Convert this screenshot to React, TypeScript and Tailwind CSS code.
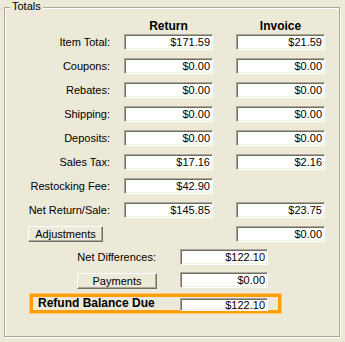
const rows: [string, string, string | null][] = [
  ['Item Total:', '$171.59', '$21.59'],
  ['Coupons:', '$0.00', '$0.00'],
  ['Rebates:', '$0.00', '$0.00'],
  ['Shipping:', '$0.00', '$0.00'],
  ['Deposits:', '$0.00', '$0.00'],
  ['Sales Tax:', '$17.16', '$2.16'],
  ['Restocking Fee:', '$42.90', null],
  ['Net Return/Sale:', '$145.85', '$23.75'],
];

const Field = ({ value, className = '' }: { value: string; className?: string }) => (
  <div
    className={`flex h-[16px] items-center justify-end bg-white pr-[2px] leading-[14px] border border-t-[#aca899] border-l-[#aca899] border-b-white border-r-white shadow-[inset_1px_1px_0_#716f64,inset_-1px_-1px_0_#f1efe2] ${className}`}
  >
    {value}
  </div>
);

const Button = ({ label, className = '' }: { label: string; className?: string }) => (
  <button
    className={`flex h-[16px] items-center justify-center bg-[#ece9d8] leading-[14px] border border-t-white border-l-white border-b-[#716f64] border-r-[#716f64] shadow-[inset_-1px_-1px_0_#aca899] ${className}`}
  >
    {label}
  </button>
);

export default function App() {
  return (
    <div className="w-[345px] h-[342px] bg-[#ece9d8] pt-[7px] pl-[4px] text-[11px] text-black font-['Liberation_Sans',Arial,sans-serif]">
      <div className="relative w-[336px] h-[330px] border border-[#aca899] shadow-[inset_1px_1px_0_#fff,1px_1px_0_#fff]">
        <span className="absolute left-[5px] top-[-8px] bg-[#ece9d8] px-[2px] leading-[13px]">Totals</span>

        <div className="flex pt-[11px] text-[12px] font-bold leading-[14px]">
          <div className="w-[105px]" />
          <div className="ml-[14px] w-[89px] text-center">Return</div>
          <div className="ml-[23px] w-[89px] text-center">Invoice</div>
        </div>

        <div className="mt-[1px] flex flex-col gap-[8px]">
          {rows.map(([label, ret, inv]) => (
            <div key={label} className="flex h-[16px] items-center">
              <div className="w-[105px] text-right leading-[16px]">{label}</div>
              <Field value={ret} className="ml-[14px] w-[89px]" />
              {inv !== null && <Field value={inv} className="ml-[23px] w-[89px]" />}
            </div>
          ))}
          <div className="flex h-[16px] items-center">
            <Button label="Adjustments" className="ml-[23px] w-[75px]" />
            <Field value="$0.00" className="ml-[133px] w-[89px]" />
          </div>
        </div>

        <div className="mt-[7px] flex h-[16px] items-center">
          <div className="w-[151px] text-right leading-[16px]">Net Differences:</div>
          <Field value="$122.10" className="ml-[24px] w-[88px]" />
        </div>

        <div className="mt-[7px] flex h-[16px] items-center">
          <Button label="Payments" className="ml-[72px] mt-[1px] w-[80px]" />
          <Field value="$0.00" className="ml-[23px] w-[88px]" />
        </div>

        <div className="mt-[6px] ml-[25px] flex h-[19px] w-[251px] items-start border-[3px] border-[#ff9d0a] shadow-[0_0_0_1px_#ffc76e]">
          <div className="w-[147px] pl-[5px] text-[12px] font-bold leading-[13px]">Refund Balance Due</div>
          <Field value="$122.10" className="mt-[1px] !h-[13px] w-[88px] !leading-[12px]" />
        </div>
      </div>
    </div>
  );
}
